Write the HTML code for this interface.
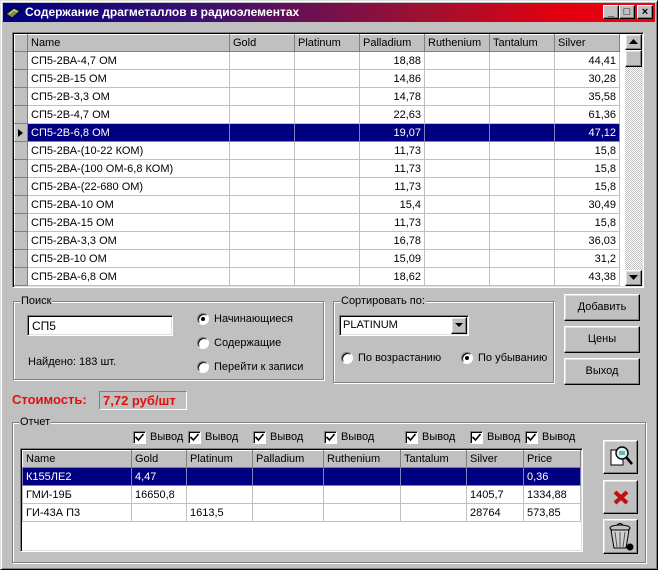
<!DOCTYPE html>
<html><head><meta charset="utf-8">
<style>
*{box-sizing:border-box;margin:0;padding:0}
body{width:658px;height:570px;background:#c0c0c0;font-family:"Liberation Sans",Arial,sans-serif;font-size:11px;color:#000;position:relative;overflow:hidden}
.abs{position:absolute}
.win{left:0;top:0;width:658px;height:570px;border:1px solid;border-color:#dfdfdf #000 #000 #dfdfdf;box-shadow:inset 1px 1px 0 #fff,inset -1px -1px 0 #808080}
.title{left:3px;top:3px;width:652px;height:19px;background:linear-gradient(90deg,#000080 0%,#3a1070 30%,#a01030 65%,#e00010 85%,#f00010 100%);color:#fff;font-weight:bold;font-size:12px;line-height:19px;padding-left:22px}
.tb{top:5px;width:16px;height:14px;background:#c0c0c0;border:1px solid;border-color:#fff #000 #000 #fff;box-shadow:inset -1px -1px 0 #808080;font-size:11px;font-weight:bold;text-align:center;line-height:12px}
.sunk{border:1px solid;border-color:#808080 #fff #fff #808080;box-shadow:inset 1px 1px 0 #000,inset -1px -1px 0 #dfdfdf}
table{border-collapse:collapse;table-layout:fixed;position:absolute}
td{border:1px solid #c0c0c0;height:18px;padding:0 3px;white-space:nowrap;overflow:hidden;background:#fff}
th{background:#c0c0c0;font-weight:normal;text-align:left;height:17px;padding:0 3px;border:1px solid;border-color:#fff #808080 #808080 #fff;white-space:nowrap;overflow:hidden}
td.ind{background:#c0c0c0;border:1px solid;border-color:#fff #808080 #808080 #fff;padding:0}
td.r{text-align:right}
tr.sel td{background:#000080;color:#fff;border-color:#8080c0}
tr.sel td.ind{background:#c0c0c0;border-color:#fff #808080 #808080 #fff}
.grp{border:1px solid #808080;box-shadow:1px 1px 0 #fff,inset 1px 1px 0 #fff}
.gl{background:#c0c0c0;padding:0 1px;top:-7px;left:6px;position:absolute;line-height:12px}
.btn{background:#c0c0c0;border:1px solid;border-color:#fff #000 #000 #fff;box-shadow:inset -1px -1px 0 #808080,inset 1px 1px 0 #dfdfdf;text-align:center}
.radio{width:12px;height:12px;border-radius:50%;background:#fff;border:1px solid;border-color:#808080 #fff #fff #808080;box-shadow:inset 1px 1px 0 #000}
.radio.on::after{content:"";position:absolute;left:3px;top:3px;width:4px;height:4px;border-radius:50%;background:#000}
.cb{width:13px;height:13px;background:#fff;border:1px solid;border-color:#808080 #fff #fff #808080;box-shadow:inset 1px 1px 0 #000}
</style></head><body>
<div class="abs win"></div>
<div class="abs title">Содержание драгметаллов в радиоэлементах</div>
<svg class="abs" style="left:5px;top:6px" width="16" height="14" viewBox="0 0 16 14"><path d="M1 8 L9 2 L15 5 L7 12 Z" fill="#7a8a50" stroke="#000" stroke-width=".8"/><path d="M4 8 L9 4 L12 6" stroke="#e0e0a0" fill="none"/></svg>
<div class="abs tb" style="left:603px">_</div>
<div class="abs tb" style="left:619px">□</div>
<div class="abs tb" style="left:637px">×</div>

<div class="abs sunk" style="left:12px;top:32px;width:632px;height:256px;background:#fff"></div>
<table style="left:14px;top:34px;width:605px">
<colgroup><col style="width:13px"><col style="width:202px"><col style="width:65px"><col style="width:65px"><col style="width:65px"><col style="width:65px"><col style="width:65px"><col style="width:65px"></colgroup>
<tr><th></th><th>Name</th><th>Gold</th><th>Platinum</th><th>Palladium</th><th>Ruthenium</th><th>Tantalum</th><th>Silver</th></tr>
<tr><td class="ind"></td><td>СП5-2ВА-4,7 ОМ</td><td></td><td></td><td class="r">18,88</td><td></td><td></td><td class="r">44,41</td></tr>
<tr><td class="ind"></td><td>СП5-2В-15 ОМ</td><td></td><td></td><td class="r">14,86</td><td></td><td></td><td class="r">30,28</td></tr>
<tr><td class="ind"></td><td>СП5-2В-3,3 ОМ</td><td></td><td></td><td class="r">14,78</td><td></td><td></td><td class="r">35,58</td></tr>
<tr><td class="ind"></td><td>СП5-2В-4,7 ОМ</td><td></td><td></td><td class="r">22,63</td><td></td><td></td><td class="r">61,36</td></tr>
<tr class="sel"><td class="ind"><svg width="8" height="10" style="display:block;margin-left:2px"><path d="M1 1 L6 5 L1 9Z"/></svg></td><td>СП5-2В-6,8 ОМ</td><td></td><td></td><td class="r">19,07</td><td></td><td></td><td class="r">47,12</td></tr>
<tr><td class="ind"></td><td>СП5-2ВА-(10-22 КОМ)</td><td></td><td></td><td class="r">11,73</td><td></td><td></td><td class="r">15,8</td></tr>
<tr><td class="ind"></td><td>СП5-2ВА-(100 ОМ-6,8 КОМ)</td><td></td><td></td><td class="r">11,73</td><td></td><td></td><td class="r">15,8</td></tr>
<tr><td class="ind"></td><td>СП5-2ВА-(22-680 ОМ)</td><td></td><td></td><td class="r">11,73</td><td></td><td></td><td class="r">15,8</td></tr>
<tr><td class="ind"></td><td>СП5-2ВА-10 ОМ</td><td></td><td></td><td class="r">15,4</td><td></td><td></td><td class="r">30,49</td></tr>
<tr><td class="ind"></td><td>СП5-2ВА-15 ОМ</td><td></td><td></td><td class="r">11,73</td><td></td><td></td><td class="r">15,8</td></tr>
<tr><td class="ind"></td><td>СП5-2ВА-3,3 ОМ</td><td></td><td></td><td class="r">16,78</td><td></td><td></td><td class="r">36,03</td></tr>
<tr><td class="ind"></td><td>СП5-2В-10 ОМ</td><td></td><td></td><td class="r">15,09</td><td></td><td></td><td class="r">31,2</td></tr>
<tr><td class="ind"></td><td>СП5-2ВА-6,8 ОМ</td><td></td><td></td><td class="r">18,62</td><td></td><td></td><td class="r">43,38</td></tr>
</table>
<div class="abs" style="left:625px;top:34px;width:17px;height:252px;background:repeating-conic-gradient(#c0c0c0 0 25%,#fff 0 50%) 0 0/2px 2px"></div>
<div class="abs btn" style="left:625px;top:34px;width:17px;height:16px"><svg width="9" height="6" style="margin-top:4px"><path d="M4.5 0 L9 5 L0 5Z"/></svg></div>
<div class="abs btn" style="left:625px;top:50px;width:17px;height:17px"></div>
<div class="abs btn" style="left:625px;top:270px;width:17px;height:16px"><svg width="9" height="6" style="margin-top:4px"><path d="M0 0 L9 0 L4.5 5Z"/></svg></div>

<div class="abs grp" style="left:13px;top:301px;width:311px;height:79px"><span class="gl">Поиск</span></div>
<div class="abs sunk" style="left:27px;top:315px;width:146px;height:21px;background:#fff;padding:3px 4px;font-size:12px">СП5</div>
<div class="abs" style="left:28px;top:356px">Найдено: 183 шт.</div>
<div class="abs radio on" style="left:197px;top:313px"></div><div class="abs" style="left:214px;top:313px">Начинающиеся</div>
<div class="abs radio" style="left:197px;top:337px"></div><div class="abs" style="left:214px;top:337px">Содержащие</div>
<div class="abs radio" style="left:197px;top:361px"></div><div class="abs" style="left:214px;top:361px">Перейти к записи</div>

<div class="abs grp" style="left:333px;top:301px;width:221px;height:82px"><span class="gl">Сортировать по:</span></div>
<div class="abs sunk" style="left:339px;top:315px;width:130px;height:21px;background:#fff;padding:3px 3px;font-size:11px">PLATINUM</div>
<div class="abs btn" style="left:451px;top:317px;width:16px;height:17px"><svg width="8" height="5" style="margin-top:5px"><path d="M0 0 L8 0 L4 4Z"/></svg></div>
<div class="abs radio" style="left:341px;top:352px"></div><div class="abs" style="left:358px;top:352px">По возрастанию</div>
<div class="abs radio on" style="left:461px;top:352px"></div><div class="abs" style="left:478px;top:352px">По убыванию</div>

<div class="abs btn" style="left:564px;top:294px;width:76px;height:27px;line-height:25px">Добавить</div>
<div class="abs btn" style="left:564px;top:326px;width:76px;height:27px;line-height:25px">Цены</div>
<div class="abs btn" style="left:564px;top:358px;width:76px;height:27px;line-height:25px">Выход</div>

<div class="abs" style="left:12px;top:392px;color:#e01010;font-weight:bold;font-size:13px">Стоимость:</div>
<div class="abs" style="left:99px;top:391px;width:88px;height:19px;border:1px solid;border-color:#808080 #fff #fff #808080;color:#e01010;font-weight:bold;font-size:13px;padding:1px 3px">7,72 руб/шт</div>

<div class="abs grp" style="left:12px;top:422px;width:634px;height:141px"><span class="gl">Отчет</span></div>
<div class="abs cb" style="left:133px;top:431px"></div><div class="abs" style="left:150px;top:431px">Вывод</div>
<div class="abs cb" style="left:188px;top:431px"></div><div class="abs" style="left:205px;top:431px">Вывод</div>
<div class="abs cb" style="left:253px;top:431px"></div><div class="abs" style="left:270px;top:431px">Вывод</div>
<div class="abs cb" style="left:324px;top:431px"></div><div class="abs" style="left:341px;top:431px">Вывод</div>
<div class="abs cb" style="left:405px;top:431px"></div><div class="abs" style="left:422px;top:431px">Вывод</div>
<div class="abs cb" style="left:470px;top:431px"></div><div class="abs" style="left:487px;top:431px">Вывод</div>
<div class="abs cb" style="left:525px;top:431px"></div><div class="abs" style="left:542px;top:431px">Вывод</div>
<svg class="abs" style="left:0;top:0" width="658" height="450"><g fill="none" stroke="#000" stroke-width="1.6">
<path d="M135.5 437 l3 3 l5 -6"/><path d="M190.5 437 l3 3 l5 -6"/><path d="M255.5 437 l3 3 l5 -6"/><path d="M326.5 437 l3 3 l5 -6"/><path d="M407.5 437 l3 3 l5 -6"/><path d="M472.5 437 l3 3 l5 -6"/><path d="M527.5 437 l3 3 l5 -6"/></g></svg>

<div class="abs sunk" style="left:20px;top:448px;width:563px;height:104px;background:#fff"></div>
<table style="left:22px;top:450px;width:558px">
<colgroup><col style="width:109px"><col style="width:55px"><col style="width:66px"><col style="width:71px"><col style="width:77px"><col style="width:66px"><col style="width:57px"><col style="width:57px"></colgroup>
<tr><th>Name</th><th>Gold</th><th>Platinum</th><th>Palladium</th><th>Ruthenium</th><th>Tantalum</th><th>Silver</th><th>Price</th></tr>
<tr class="sel"><td>К155ЛЕ2</td><td>4,47</td><td></td><td></td><td></td><td></td><td></td><td>0,36</td></tr>
<tr><td>ГМИ-19Б</td><td>16650,8</td><td></td><td></td><td></td><td></td><td>1405,7</td><td>1334,88</td></tr>
<tr><td>ГИ-43А П3</td><td></td><td>1613,5</td><td></td><td></td><td></td><td>28764</td><td>573,85</td></tr>
</table>

<div class="abs btn" style="left:603px;top:440px;width:35px;height:34px"><svg width="30" height="30" style="margin-top:1px"><rect x="5" y="8" width="12" height="15" fill="#fff" stroke="#000"/><circle cx="16" cy="11" r="6" fill="#d8f0f0" stroke="#000" stroke-width="1.4"/><path d="M13 10h6M13 12h6" stroke="#008080"/><path d="M20 15 L26 22" stroke="#000" stroke-width="2.5"/></svg></div>
<div class="abs btn" style="left:603px;top:480px;width:35px;height:34px"><svg width="30" height="30" style="margin-top:1px"><path d="M9 10 L21 21 M21 10 L9 21" stroke="#c01010" stroke-width="4"/></svg></div>
<div class="abs btn" style="left:603px;top:519px;width:35px;height:35px"><svg width="32" height="32"><ellipse cx="15" cy="8" rx="10" ry="3" fill="#c0c0c0" stroke="#000"/><path d="M12 5 q3 -3 6 0" fill="none" stroke="#000"/><path d="M6 10 L9 28 L21 28 L24 10Z" fill="#d0d0d0" stroke="#000"/><path d="M10 12 L12 27 M15 12 L15 27 M20 12 L18 27" stroke="#555"/><circle cx="25" cy="27" r="3.5" fill="#000"/></svg></div>
</body></html>
